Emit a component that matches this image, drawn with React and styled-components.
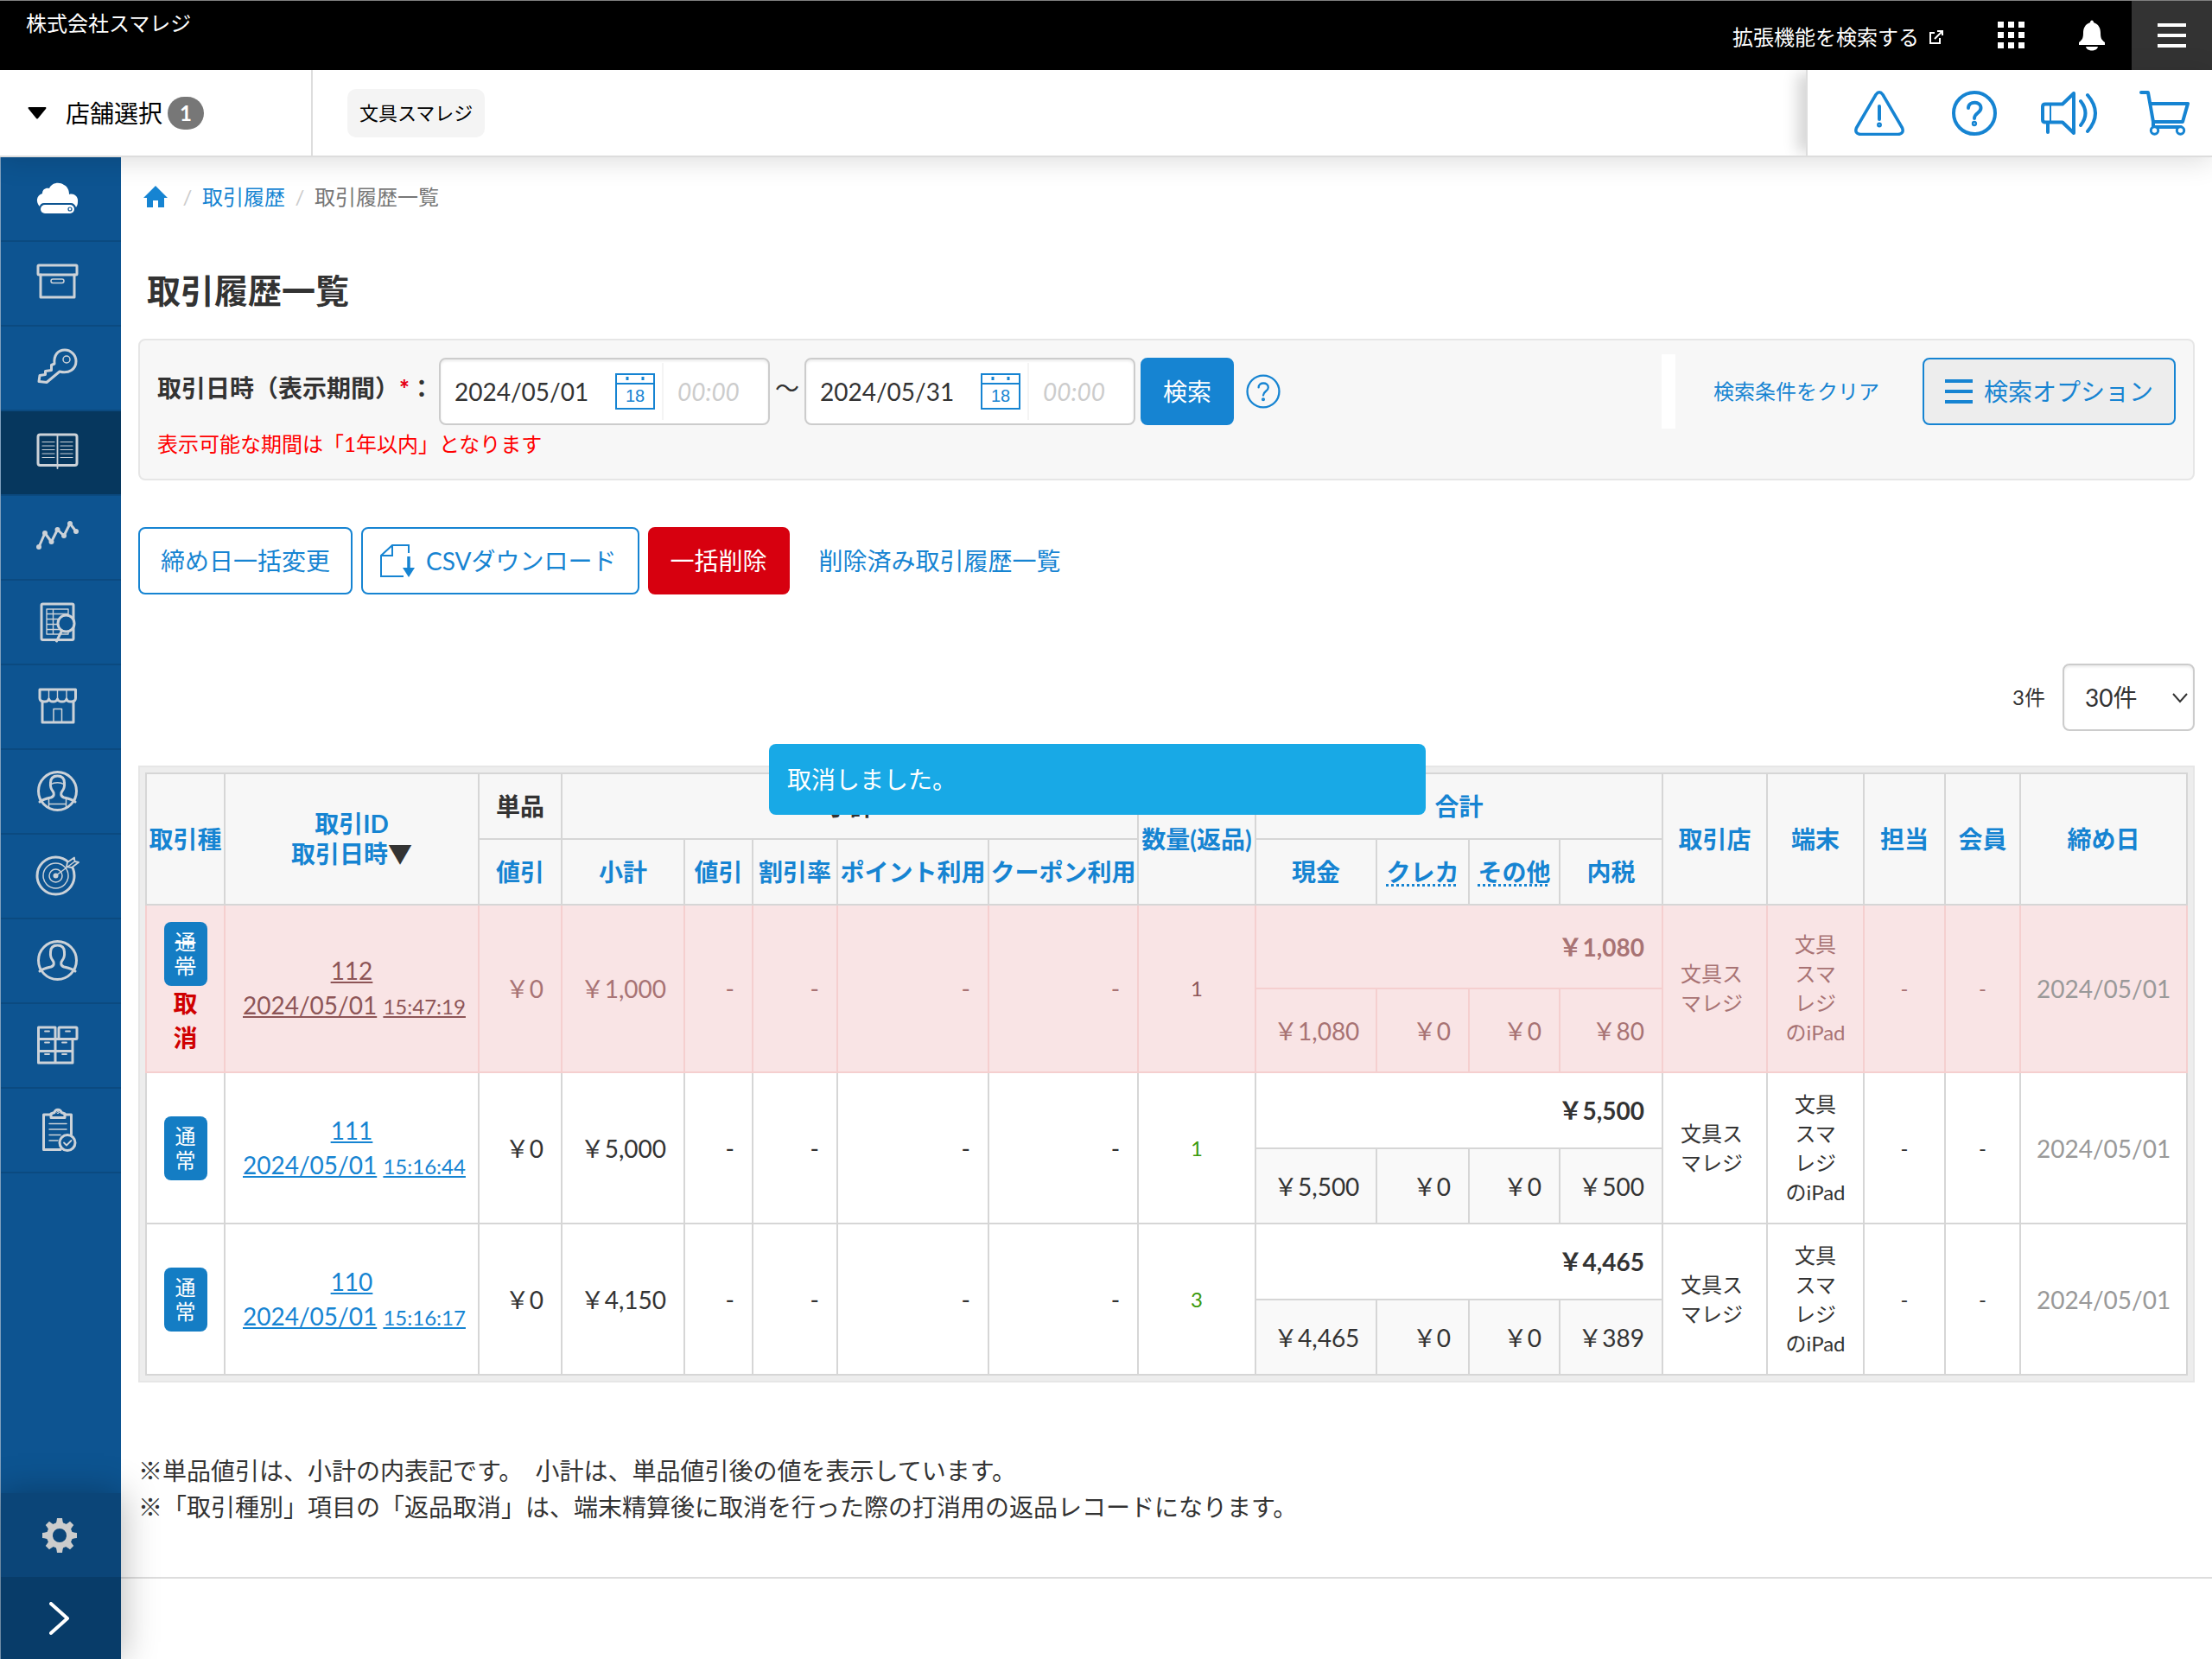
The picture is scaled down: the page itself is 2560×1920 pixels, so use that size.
import React from "react";

import styled, { createGlobalStyle, css } from "styled-components";



const BLUE = "#1684d2";

const menus = [
  "cloud",
  "box",
  "key",
  "book",
  "graph",
  "report",
  "shop",
  "staff",
  "target",
  "member",
  "stock",
  "order",
];

const columns = [91, 294, 96, 142, 79, 98, 175, 173, 136, 140, 107, 105, 119, 121, 112, 94, 87, 193];

const deals = [
  {
    id: "112",
    time: "15:47:19",
    canceled: true,
    subtotal: "￥1,000",
    count: "1",
    total: "￥1,080",
    cash: "￥1,080",
    tax: "￥80",
  },
  {
    id: "111",
    time: "15:16:44",
    canceled: false,
    subtotal: "￥5,000",
    count: "1",
    total: "￥5,500",
    cash: "￥5,500",
    tax: "￥500",
  },
  {
    id: "110",
    time: "15:16:17",
    canceled: false,
    subtotal: "￥4,150",
    count: "3",
    total: "￥4,465",
    cash: "￥4,465",
    tax: "￥389",
  },
];

const personBody = "M4 36C8 33 13 32 17 31C21 29.500 21 26 19 23.500C17 21 16 19 16.500 14C16.500 8.500 19 6 24.500 6C30 6 32.500 8.500 32.500 14C33 19 32 21 30 23.500C28 26 28 29.500 32 31C36 32 41 33 45 36";

const menuIcons = {
  cloud: (
    <g stroke="none" fill="#fff">
      <path d="M4 33C-1 28 0 20 7 18C7 13 11 11 15 12C18 5 27 4 32 8C36 10 38 14 38 19C44 17 49 22 48 28C48 31 47 32 46 34C45 31 43 29 40 29H9C6 29 4 31 4 33Z" />
      <rect x="5" y="31" width="39" height="10" rx="5" />
      <circle cx="39" cy="36" r="2" fill="none" stroke="#0d5491" strokeWidth="1.200" />
    </g>
  ),
  box: (
    <g>
      <rect x="2" y="3" width="45" height="11" rx="1" />
      <path d="M5 14V40H44V14" />
      <rect x="17" y="19" width="15" height="4.500" rx="2.200" strokeWidth="1.500" />
    </g>
  ),
  key: (
    <g>
      <path d="M21 19L17.500 20.500V26.500L10.500 27.500V31.500L4 32.500L3 39.500L12 40.500L27 28C38 31 46 25 46 16C46 9 40 3 33 3C25 3 20 9 21 19Z" />
      <circle cx="35" cy="14" r="4" strokeWidth="1.500" />
    </g>
  ),
  book: (
    <g>
      <rect x="2" y="3" width="45" height="35.500" rx="2.500" />
      <path d="M24.500 3V42" strokeWidth="1.800" />
      <path
        d="M7 11.500H21M7 16H21M7 20.500H21M7 25H21M7 29.500H21M28 11.500H42M28 16H42M28 20.500H42M28 25H42M28 29.500H42"
        strokeWidth="1.200"
      />
    </g>
  ),
  graph: (
    <g>
      <path d="M3 35L10 19L17.500 29L24.500 15L32 22L39 8L46 17" />
      <g fill="#ccd2d8" stroke="none">
        <circle cx="3" cy="35" r="3" />
        <circle cx="10" cy="19" r="3" />
        <circle cx="17.500" cy="29" r="3" />
        <circle cx="24.500" cy="15" r="3" />
        <circle cx="32" cy="22" r="3" />
        <circle cx="39" cy="8" r="3" />
        <circle cx="46" cy="17" r="3" />
      </g>
    </g>
  ),
  report: (
    <g>
      <rect x="6" y="3" width="37" height="41.500" rx="1.500" />
      <path d="M12 9H37V38H12ZM19.500 9V38M12 14.500H37M12 20.500H37M12 26.500H37M12 32.500H37" strokeWidth="1.400" />
      <circle cx="34.500" cy="25.500" r="9.500" fill="#0d5491" />
      <path d="M29.500 34L23.500 46" strokeWidth="3" />
    </g>
  ),
  shop: (
    <g>
      <path d="M4 4H45.500V14C45.500 19 36 19.500 35 15C34 19 25.500 19 24.500 15C23.500 19 15.500 19 14.500 15C13.500 19.500 4 19 4 14Z" />
      <path d="M14.500 5V15M24.500 5V15M35 5V15" strokeWidth="1.400" />
      <path d="M7 18V42H43V18" />
      <path d="M20 42V26.500H29.500V42" strokeWidth="1.500" />
    </g>
  ),
  staff: (
    <g>
      <circle cx="24.500" cy="23.500" r="22" />
      <path d={personBody} />
      <path d="M16.500 16C21 13 28 13 32.500 16M14.500 32V43M34.500 32V43M14.500 38.500H34.500" strokeWidth="1.500" />
    </g>
  ),
  target: (
    <g>
      <circle cx="22.500" cy="23.500" r="21.500" />
      <circle cx="22.500" cy="23.500" r="14.500" strokeWidth="1.500" />
      <circle cx="22.500" cy="23.500" r="7.500" strokeWidth="1.500" />
      <circle cx="22.500" cy="23.500" r="3" fill="#ccd2d8" stroke="none" />
      <path d="M35 13L36 8L44 2.500L44.500 7L49 8L41 14L35 13Z" fill="#0d5491" strokeWidth="1.800" />
      <path d="M22.500 23.500L44.500 7" strokeWidth="1.500" />
    </g>
  ),
  member: (
    <g>
      <circle cx="24.500" cy="23.500" r="22" />
      <path d={personBody} />
    </g>
  ),
  stock: (
    <g>
      <path d="M2.500 3H22V44H2.500ZM2.500 16.500H22M2.500 30.500H42M22 16.500H42V44H22" />
      <rect x="26" y="3" width="21" height="13.500" rx="1" />
      <path d="M10 7.500H15M10 20.500H15M10 34H15M34 7.500H39M30 20.500H35M30 34H35" strokeWidth="1.800" />
    </g>
  ),
  order: (
    <g>
      <path d="M17 6H8.500V46.500H28M33 6H40.500V29" />
      <path d="M17 9.500V5L21 3.500C22 -1 28 -1 29 3.500L33 5V9.500Z" />
      <circle cx="25" cy="3.500" r="1.200" strokeWidth="1" />
      <path d="M15 16.500H35M15 23H35M15 29.500H28M15 36H25" strokeWidth="1.500" />
      <circle cx="36" cy="38.500" r="9" fill="#0d5491" />
      <path d="M32 38.500L35 41.500L40.500 36" strokeWidth="1.800" />
    </g>
  ),
};

function MenuIcon({ name }) {
  return (
    <LineIcon width="48" height="48" viewBox="0 0 48 48" aria-hidden="true">
      {menuIcons[name]}
    </LineIcon>
  );
}

function Bars({ color, width }) {
  return (
    <svg width={width} height="30" viewBox="0 0 32 30" preserveAspectRatio="none" fill={color} aria-hidden="true">
      <path d="M0 1H32V5H0ZM0 13H32V17H0ZM0 25H32V29H0Z" />
    </svg>
  );
}

function Gear() {
  return (
    <svg width="42" height="42" viewBox="-21 -21 42 42" aria-hidden="true">
      <circle r="11.500" fill="none" stroke="#ccc" strokeWidth="7" />
      {[0, 45, 90, 135, 180, 225, 270, 315].map((deg) => (
        <path key={deg} d="M-5.500 -12.500C-3.500 -14 -3.500 -17 -3 -20H3C3.500 -17 3.500 -14 5.500 -12.500Z" fill="#ccc" transform={`rotate(${deg})`} />
      ))}
    </svg>
  );
}

function QuestionIcon({ size, weight }) {
  return (
    <svg width={size} height={size} viewBox="0 0 52 52" fill="none" stroke={BLUE} strokeWidth={weight} strokeLinecap="round" aria-hidden="true">
      <circle cx="26" cy="26" r="24" />
      <path d="M19 20C19 11.500 33.500 11.500 33.500 20C33.500 26 26 25.500 26 32" />
      <circle cx="26" cy="38" r="1.200" />
    </svg>
  );
}

function DateTimeField({ label, value }) {
  return (
    <DateBox>
      <DateInput aria-label={label} defaultValue={value} />
      <CalendarButton aria-label={label + " カレンダー"}>
        <svg width="46" height="42" viewBox="0 0 46 42" fill="none" stroke={BLUE} strokeWidth="2">
          <path d="M1 1H45V41H1ZM1 12H45" />
          <path d="M14 4V8M32 4V8" strokeWidth="3" />
          <text x="23" y="33" fontSize="20" textAnchor="middle" fill={BLUE} stroke="none" fontFamily="Liberation Sans, sans-serif">18</text>
        </svg>
      </CalendarButton>
      <TimeInput aria-label={label + " 時刻"} placeholder="00:00" />
    </DateBox>
  );
}

function DealRows({ deal }) {
  const c = deal.canceled;
  return (
    <>
      <Row $canceled={c}>
        <Td rowSpan={2} $flush>
          <Badge $strike={c}>通常</Badge>
          {c && <Canceled>取<br />消</Canceled>}
        </Td>
        <Td rowSpan={2}>
          <DealLink href="#" $canceled={c}>{deal.id}</DealLink>
          <br />
          <DealLink href="#" $canceled={c}>2024/05/01</DealLink>{" "}
          <DealLink href="#" $canceled={c} $small>{deal.time}</DealLink>
        </Td>
        <Td rowSpan={2} $align="right">￥0</Td>
        <Td rowSpan={2} $align="right">{deal.subtotal}</Td>
        <Td rowSpan={2} $align="right">-</Td>
        <Td rowSpan={2} $align="right">-</Td>
        <Td rowSpan={2} $align="right">-</Td>
        <Td rowSpan={2} $align="right">-</Td>
        <Td rowSpan={2} $small $color={c ? "#8d5557" : "#3c9a0c"}>{deal.count}</Td>
        <Td colSpan={4} $align="right" $bold>{deal.total}</Td>
        <Td rowSpan={2} $align="left" $small>文具ス<br />マレジ</Td>
        <Td rowSpan={2} $small $flush>文具<br />スマ<br />レジ<br />のiPad</Td>
        <Td rowSpan={2} $small>-</Td>
        <Td rowSpan={2} $small>-</Td>
        <Td rowSpan={2} $color="#999" $flush>2024/05/01</Td>
      </Row>
      <Row $canceled={c}>
        <Td $align="right" $detail>{deal.cash}</Td>
        <Td $align="right" $detail>￥0</Td>
        <Td $align="right" $detail>￥0</Td>
        <Td $align="right" $detail>{deal.tax}</Td>
      </Row>
    </>
  );
}

function App() {
  return (
    <Page>
      <GlobalStyle />
      <TopBar>
        <Company>株式会社スマレジ</Company>
        <ExtensionLink href="#">
          拡張機能を検索する
          <svg width="16" height="16" viewBox="0 0 16 16" fill="none" stroke="#fff" strokeWidth="2" aria-hidden="true">
            <path d="M6 3H1V15H12V9M6 10L14 2M9 1H15V6" />
          </svg>
        </ExtensionLink>
        <TopButton aria-label="アプリ一覧">
          <svg width="32" height="32" viewBox="0 0 32 32" fill="#fff">
            <path d="M0 0H7V7H0ZM12 0H19V7H12ZM24 0H31V7H24ZM0 12H7V19H0ZM12 12H19V19H12ZM24 12H31V19H24ZM0 24H7V31H0ZM12 24H19V31H12ZM24 24H31V31H24Z" />
          </svg>
        </TopButton>
        <TopButton aria-label="お知らせ">
          <svg width="32" height="36" viewBox="0 0 32 36" fill="#fff">
            <path d="M14 3C14 -0.500 18 -0.500 18 3C24 5 26 10 26 15C26 21 27 23 31 26V29H1V26C5 23 6 21 6 15C6 10 8 5 14 3Z" />
            <path d="M9 31H23C22 37 10 37 9 31Z" />
          </svg>
        </TopButton>
        <MenuButton aria-label="メニュー">
          <Bars color="#fff" width={33} />
        </MenuButton>
      </TopBar>

      <SubBar>
        <StoreSelect>
          <svg width="22" height="14" viewBox="0 0 22 14" aria-hidden="true">
            <path d="M1 0H21Q22 1 21 2L12 13Q11 14 10 13L1 2Q0 1 1 0Z" />
          </svg>
          店舗選択
          <Count>1</Count>
        </StoreSelect>
        <StoreArea>
          <Chip>文具スマレジ</Chip>
        </StoreArea>
        <Tools>
          <ToolButton aria-label="注意">
            <svg width="58" height="52" viewBox="0 0 58 52" fill="none" stroke={BLUE} strokeWidth="3.500" strokeLinecap="round" strokeLinejoin="round">
              <path d="M25 4.500Q29 -1 33 4.500L55.500 43Q58 49.500 51 50.500H7Q0 49.500 2.500 43Z" />
              <path d="M29 18V33" strokeWidth="4" />
              <circle cx="29" cy="39.500" r="1.200" />
            </svg>
          </ToolButton>
          <ToolButton aria-label="ヘルプ">
            <QuestionIcon size={52} weight={4} />
          </ToolButton>
          <ToolButton aria-label="お知らせ一覧">
            <svg width="66" height="50" viewBox="0 0 66 50" fill="none" stroke={BLUE} strokeWidth="4" strokeLinecap="round" strokeLinejoin="round">
              <path d="M38 2V48L25 35.500H5Q2 35.500 2 32.500V17.500Q2 14.500 5 14.500H25Z" />
              <path d="M11 15V35" strokeWidth="2" />
              <path d="M8 36V47" />
              <path d="M46 11Q57 25 46 39M54 4Q72 25 54 46" />
            </svg>
          </ToolButton>
          <ToolButton aria-label="カート">
            <svg width="58" height="52" viewBox="0 0 58 52" fill="none" stroke={BLUE} strokeWidth="4" strokeLinecap="round" strokeLinejoin="round">
              <path d="M2 2H10L16 36H50L56 15H13" />
              <path d="M16 36V42H48" />
              <circle cx="17.500" cy="46" r="4.200" fill="#fff" strokeWidth="3" />
              <circle cx="47.500" cy="46" r="4.200" fill="#fff" strokeWidth="3" />
            </svg>
          </ToolButton>
        </Tools>
      </SubBar>

      <Body>
        <SideBar>
          {menus.map((name) => (
            <SideLink href="#" key={name} $active={name === "book"} aria-label={name}>
              <MenuIcon name={name} />
            </SideLink>
          ))}
          <SideSpace />
          <SideFoot>
            <SettingButton aria-label="設定">
              <Gear />
            </SettingButton>
            <OpenButton aria-label="開く">
              <svg width="24" height="38" viewBox="0 0 24 38" fill="none" stroke="#fff" strokeWidth="4" strokeLinecap="round" strokeLinejoin="round">
                <path d="M2 2L21 19L2 36" />
              </svg>
            </OpenButton>
          </SideFoot>
        </SideBar>

        <Main>
          <Content>
            <Breadcrumb>
              <HomeLink href="#" aria-label="ホーム">
                <svg width="28" height="26" viewBox="0 0 28 26" fill={BLUE}>
                  <path d="M14 0L28 14H24V25H17V17H11V25H4V14H0Z" />
                </svg>
              </HomeLink>
              <Slash>/</Slash>
              <a href="#">取引履歴</a>
              <Slash>/</Slash>
              <span>取引履歴一覧</span>
            </Breadcrumb>

            <Title>取引履歴一覧</Title>

            <SearchBox>
              <SearchRow>
                <SearchLabel>取引日時（表示期間）<b>*</b>：</SearchLabel>
                <DateTimeField label="開始日" value="2024/05/01" />
                <SearchLabel $plain>～</SearchLabel>
                <DateTimeField label="終了日" value="2024/05/31" />
                <Button $solid={BLUE}>検索</Button>
                <HelpButton aria-label="ヘルプ">
                  <QuestionIcon size={40} weight={3} />
                </HelpButton>
                <WhiteBar />
                <ClearLink href="#">検索条件をクリア</ClearLink>
                <Button $gray>
                  <Bars color={BLUE} width={32} />
                  検索オプション
                </Button>
              </SearchRow>
              <Hint>表示可能な期間は「1年以内」となります</Hint>
            </SearchBox>

            <Actions>
              <Button>締め日一括変更</Button>
              <Button $icon>
                <svg width="40" height="38" viewBox="0 0 40 38" fill="none" stroke={BLUE} strokeWidth="2" aria-hidden="true">
                  <path d="M27 37H1V13L14 1H33V10M1 13H14V1" />
                  <path d="M33 14V30" strokeWidth="3.500" />
                  <path d="M26 27H40L33 38Z" fill={BLUE} stroke="none" />
                </svg>
                CSVダウンロード
              </Button>
              <Button $solid="#d7000f">一括削除</Button>
              <DeletedLink href="#">削除済み取引履歴一覧</DeletedLink>
            </Actions>

            <Pager>
              <label htmlFor="limit">3件</label>
              <SelectWrap>
                <LimitSelect id="limit" defaultValue="30">
                  <option value="30">30件</option>
                  <option value="50">50件</option>
                </LimitSelect>
                <svg width="18" height="12" viewBox="0 0 18 12" fill="none" stroke="#333" strokeWidth="2" aria-hidden="true">
                  <path d="M1 1L9 10L17 1" />
                </svg>
              </SelectWrap>
            </Pager>

            <TableWrap>
              <Table>
                <colgroup>
                  {columns.map((w, i) => (
                    <col key={i} width={w} />
                  ))}
                </colgroup>
                <thead>
                  <tr>
                    <Th rowSpan={2}><a href="#">取引種</a></Th>
                    <Th rowSpan={2}>
                      <a href="#">取引ID</a><br />
                      <a href="#">取引日時</a>▼
                    </Th>
                    <Th>単品</Th>
                    <Th colSpan={5}>小計</Th>
                    <Th rowSpan={2}><a href="#">数量(返品)</a></Th>
                    <Th colSpan={4}><a href="#">合計</a></Th>
                    <Th rowSpan={2}><a href="#">取引店</a></Th>
                    <Th rowSpan={2}><a href="#">端末</a></Th>
                    <Th rowSpan={2}><a href="#">担当</a></Th>
                    <Th rowSpan={2}><a href="#">会員</a></Th>
                    <Th rowSpan={2}><a href="#">締め日</a></Th>
                  </tr>
                  <tr>
                    <Th><a href="#">値引</a></Th>
                    <Th><a href="#">小計</a></Th>
                    <Th><a href="#">値引</a></Th>
                    <Th><a href="#">割引率</a></Th>
                    <Th><a href="#">ポイント利用</a></Th>
                    <Th><a href="#">クーポン利用</a></Th>
                    <Th><a href="#">現金</a></Th>
                    <Th $dotted><a href="#">クレカ</a></Th>
                    <Th $dotted><a href="#">その他</a></Th>
                    <Th><a href="#">内税</a></Th>
                  </tr>
                </thead>
                <tbody>
                  {deals.map((deal) => (
                    <DealRows key={deal.id} deal={deal} />
                  ))}
                </tbody>
              </Table>
            </TableWrap>

            <Notes>
              ※単品値引は、小計の内表記です。&nbsp; 小計は、単品値引後の値を表示しています。<br />
              ※「取引種別」項目の「返品取消」は、端末精算後に取消を行った際の打消用の返品レコードになります。
            </Notes>
          </Content>
          <Line />
        </Main>
      </Body>

      <Toast role="status">取消しました。</Toast>
    </Page>
  );
}


const GlobalStyle = createGlobalStyle`
  * {
    box-sizing: border-box;
  }

  body {
    margin: 0;
    background-color: #fff;
    color: #333;
    font-family: Lato, "Noto Sans CJK JP", sans-serif;
    font-size: 28px;
    line-height: 40px;
  }

  a {
    color: ${BLUE};
    text-decoration: none;
  }

  button, input, select {
    font: inherit;
    color: inherit;
    margin: 0;
  }

  svg {
    display: block;
    flex: none;
  }
`;

const Page = styled.div`
  display: flex;
  flex-direction: column;
  min-height: 100vh;
`;

const TopBar = styled.header`
  display: flex;
  align-items: center;
  height: 81px;
  border-top: 1px solid #808080;
  background-color: #000;
  color: #fff;
  font-size: 24px;
`;

const Company = styled.div`
  align-self: flex-start;
  flex: 1;
  padding: 6px 30px;
`;

const ExtensionLink = styled.a`
  display: flex;
  align-items: center;
  gap: 12px;
  margin-right: 32px;
  padding-top: 4px;
  color: #fff;
`;

const PlainButton = styled.button`
  display: flex;
  align-items: center;
  justify-content: center;
  padding: 0;
  border: 0;
  background: none;
  cursor: pointer;
`;

const TopButton = styled(PlainButton)`
  width: 93px;
  height: 80px;
`;

const MenuButton = styled(TopButton)`
  background-color: #333;
`;

const SubBar = styled.div`
  position: relative;
  z-index: 2;
  display: flex;
  height: 101px;
  border-bottom: 2px solid #ddd;
  background-color: #fff;
  box-shadow: 0 4px 30px rgba(0, 0, 0, 0.14);
  color: #000;
`;

const StoreSelect = styled(PlainButton)`
  width: 362px;
  justify-content: flex-start;
  padding-left: 32px;
  gap: 22px;
  border-right: 2px solid #ddd;
`;

const Count = styled.span`
  margin-left: -16px;
  padding: 0 14px;
  border-radius: 19px;
  background-color: #777;
  color: #fff;
  font-size: 24px;
  font-weight: bold;
  line-height: 38px;
`;

const StoreArea = styled.div`
  display: flex;
  flex: 1;
  align-items: center;
  padding-left: 40px;
  overflow: hidden;
`;

const Chip = styled.span`
  padding: 8px 14px;
  border-radius: 10px;
  background-color: #f4f4f4;
  font-size: 22px;
`;

const Tools = styled.div`
  display: flex;
  align-items: center;
  padding-left: 28px;
  border-left: 2px solid #ddd;
  box-shadow: -14px 0 16px -4px rgba(0, 0, 0, 0.16);
  clip-path: inset(0 0 0 -40px);
`;

const ToolButton = styled(PlainButton)`
  width: 110px;
`;

const Body = styled.div`
  display: flex;
  flex: 1;
`;

const SideBar = styled.nav`
  position: relative;
  z-index: 1;
  display: flex;
  flex-direction: column;
  width: 140px;
  border-left: 1px solid #7f9fbd;
  background-color: #0d5491;
`;

const SideLink = styled.a`
  display: flex;
  align-items: center;
  justify-content: center;
  height: 98px;
  padding-right: 10px;
  border-bottom: 2px solid #0b4a80;
  background-color: ${(props) => (props.$active ? "#06375e" : "transparent")};
`;

const LineIcon = styled.svg`
  overflow: visible;
  fill: none;
  stroke: #ccd2d8;
  stroke-width: 3px;
  stroke-linecap: round;
  stroke-linejoin: round;
`;

const SideSpace = styled.div`
  flex: 1;
`;

const SideFoot = styled.div`
  box-shadow: 0 0 40px rgba(0, 0, 0, 0.3);
`;

const SettingButton = styled(PlainButton)`
  width: 100%;
  height: 97px;
  padding-right: 4px;
  background-color: #0b4578;
`;

const OpenButton = styled(PlainButton)`
  width: 100%;
  height: 95px;
  padding-right: 4px;
  background-color: #083c69;
`;

const Main = styled.main`
  flex: 1;
  min-width: 0;
`;

const Content = styled.div`
  padding: 30px 20px 0 20px;
`;

const Breadcrumb = styled.nav`
  display: flex;
  align-items: center;
  padding-left: 6px;
  color: #777;
  font-size: 24px;
  line-height: 32px;
`;

const HomeLink = styled.a`
  margin-right: 6px;
`;

const Slash = styled.span`
  width: 34px;
  color: #ccc;
  text-align: center;
`;

const Title = styled.h1`
  margin: 64px 0 28px;
  padding-left: 10px;
  font-size: 39px;
  line-height: 56px;
`;

const SearchBox = styled.section`
  padding: 20px;
  border: 2px solid #e6e6e6;
  border-radius: 8px;
  background-color: #f7f7f7;
`;

const SearchRow = styled.div`
  display: flex;
  align-items: center;
  gap: 6px;
  height: 78px;
`;

const SearchLabel = styled.span`
  padding-bottom: 8px;
  font-weight: ${(props) => (props.$plain ? "normal" : "bold")};
  white-space: nowrap;

  & b {
    color: #e60012;
  }
`;

const inputFrame = css`
  border: 2px solid #ccc;
  border-radius: 8px;
  background-color: #fff;
  box-shadow: inset 0 2px 3px rgba(0, 0, 0, 0.08);
`;

const DateBox = styled.div`
  display: flex;
  align-items: center;
  width: 383px;
  height: 78px;
  ${inputFrame}
`;

const DateInput = styled.input`
  width: 202px;
  padding: 0 0 0 16px;
  border: 0;
  outline: 0;
  background: none;
`;

const CalendarButton = styled(PlainButton)`
  margin-right: 8px;
`;

const TimeInput = styled.input`
  align-self: stretch;
  flex: 1;
  min-width: 0;
  margin: 4px 0;
  padding: 0 0 0 16px;
  border: 0;
  border-left: 2px solid #f4f4f4;
  outline: 0;
  background: none;

  &::placeholder {
    color: #ccc;
    font-style: italic;
  }
`;

const Button = styled.button`
  display: flex;
  align-items: center;
  gap: 13px;
  height: 78px;
  padding: 0 24px;
  padding-left: ${(props) => (props.$icon ? "20px" : "24px")};
  border: 2px solid ${(props) => props.$solid || BLUE};
  border-radius: 8px;
  background-color: ${(props) => props.$solid || (props.$gray ? "#ededed" : "#fff")};
  color: ${(props) => (props.$solid ? "#fff" : BLUE)};
  white-space: nowrap;
  cursor: pointer;
`;

const HelpButton = styled(PlainButton)`
  margin-left: 8px;
`;

const WhiteBar = styled.div`
  align-self: stretch;
  width: 16px;
  margin: -4px 38px -4px auto;
  background-color: #fff;
`;

const ClearLink = styled.a`
  margin-right: 44px;
  font-size: 24px;
`;

const Hint = styled.p`
  margin: 6px 0 4px;
  color: #f00;
  font-size: 24px;
  line-height: 32px;
`;

const Actions = styled.div`
  display: flex;
  align-items: center;
  gap: 10px;
  margin-top: 54px;
`;

const DeletedLink = styled.a`
  margin-left: 24px;
`;

const Pager = styled.div`
  display: flex;
  align-items: center;
  justify-content: flex-end;
  gap: 20px;
  margin-top: 80px;
  font-size: 24px;
`;

const SelectWrap = styled.div`
  position: relative;

  & svg {
    position: absolute;
    top: 34px;
    right: 8px;
    pointer-events: none;
  }
`;

const LimitSelect = styled.select`
  width: 153px;
  height: 78px;
  padding: 0 24px;
  font-size: 28px;
  appearance: none;
  ${inputFrame}
`;

const TableWrap = styled.div`
  margin-top: 40px;
  padding: 6px;
  border: 2px solid #e6e6e6;
  background-color: #ededed;
`;

const Table = styled.table`
  width: 100%;
  table-layout: fixed;
  border-collapse: collapse;
  background-color: #fff;
`;

const Th = styled.th`
  height: 76px;
  padding: 0;
  border: 2px solid #d6d6d6;
  background-color: #f7f7f7;
  line-height: 35px;
  white-space: nowrap;

  ${(props) => props.$dotted && css`
    & a {
      text-decoration: underline dotted 3px;
      text-underline-offset: 3px;
    }
  `}
`;

const Td = styled.td`
  height: ${(props) => (props.$detail ? "87px" : "88px")};
  padding: 0 ${(props) => (props.$flush ? "0" : "20px")};
  border: 2px solid #d6d6d6;
  background-color: ${(props) => (props.$detail ? "#f9f9f9" : "#fff")};
  color: ${(props) => props.$color || "inherit"};
  font-size: ${(props) => (props.$small ? "24px" : "28px")};
  font-weight: ${(props) => (props.$bold ? "bold" : "normal")};
  line-height: ${(props) => (props.$small ? "34px" : "40px")};
  text-align: ${(props) => props.$align || "center"};
  white-space: nowrap;
`;

const Row = styled.tr`
  ${(props) => props.$canceled && css`
    color: #a87374;

    & ${Td} {
      height: 97px;
      border-color: #f5cfcf;
      background-color: #f9e4e5;
    }
  `}
`;

const Badge = styled.div`
  width: 50px;
  margin: 0 auto;
  padding: 9px 13px;
  border-radius: 8px;
  background-color: #147dc4;
  color: #fff;
  font-size: 24px;
  line-height: 28px;
  white-space: normal;
  text-decoration: ${(props) => (props.$strike ? "line-through" : "none")};
`;

const Canceled = styled.div`
  color: #d00000;
  font-weight: bold;
`;

const DealLink = styled.a`
  color: ${(props) => (props.$canceled ? "#8d5557" : BLUE)};
  font-size: ${(props) => (props.$small ? "24px" : "28px")};
  text-decoration: underline;
`;

const Notes = styled.p`
  margin: 81px 0 60px;
  line-height: 42px;
`;

const Line = styled.hr`
  margin: 0;
  border: 0;
  border-top: 2px solid #ddd;
`;

const Toast = styled.div`
  position: fixed;
  top: 861px;
  left: 0;
  right: 20px;
  z-index: 3;
  width: 760px;
  margin: 0 auto;
  padding: 21px;
  border-radius: 8px;
  background-color: #18a9e6;
  color: #fff;
`;

export default App;
